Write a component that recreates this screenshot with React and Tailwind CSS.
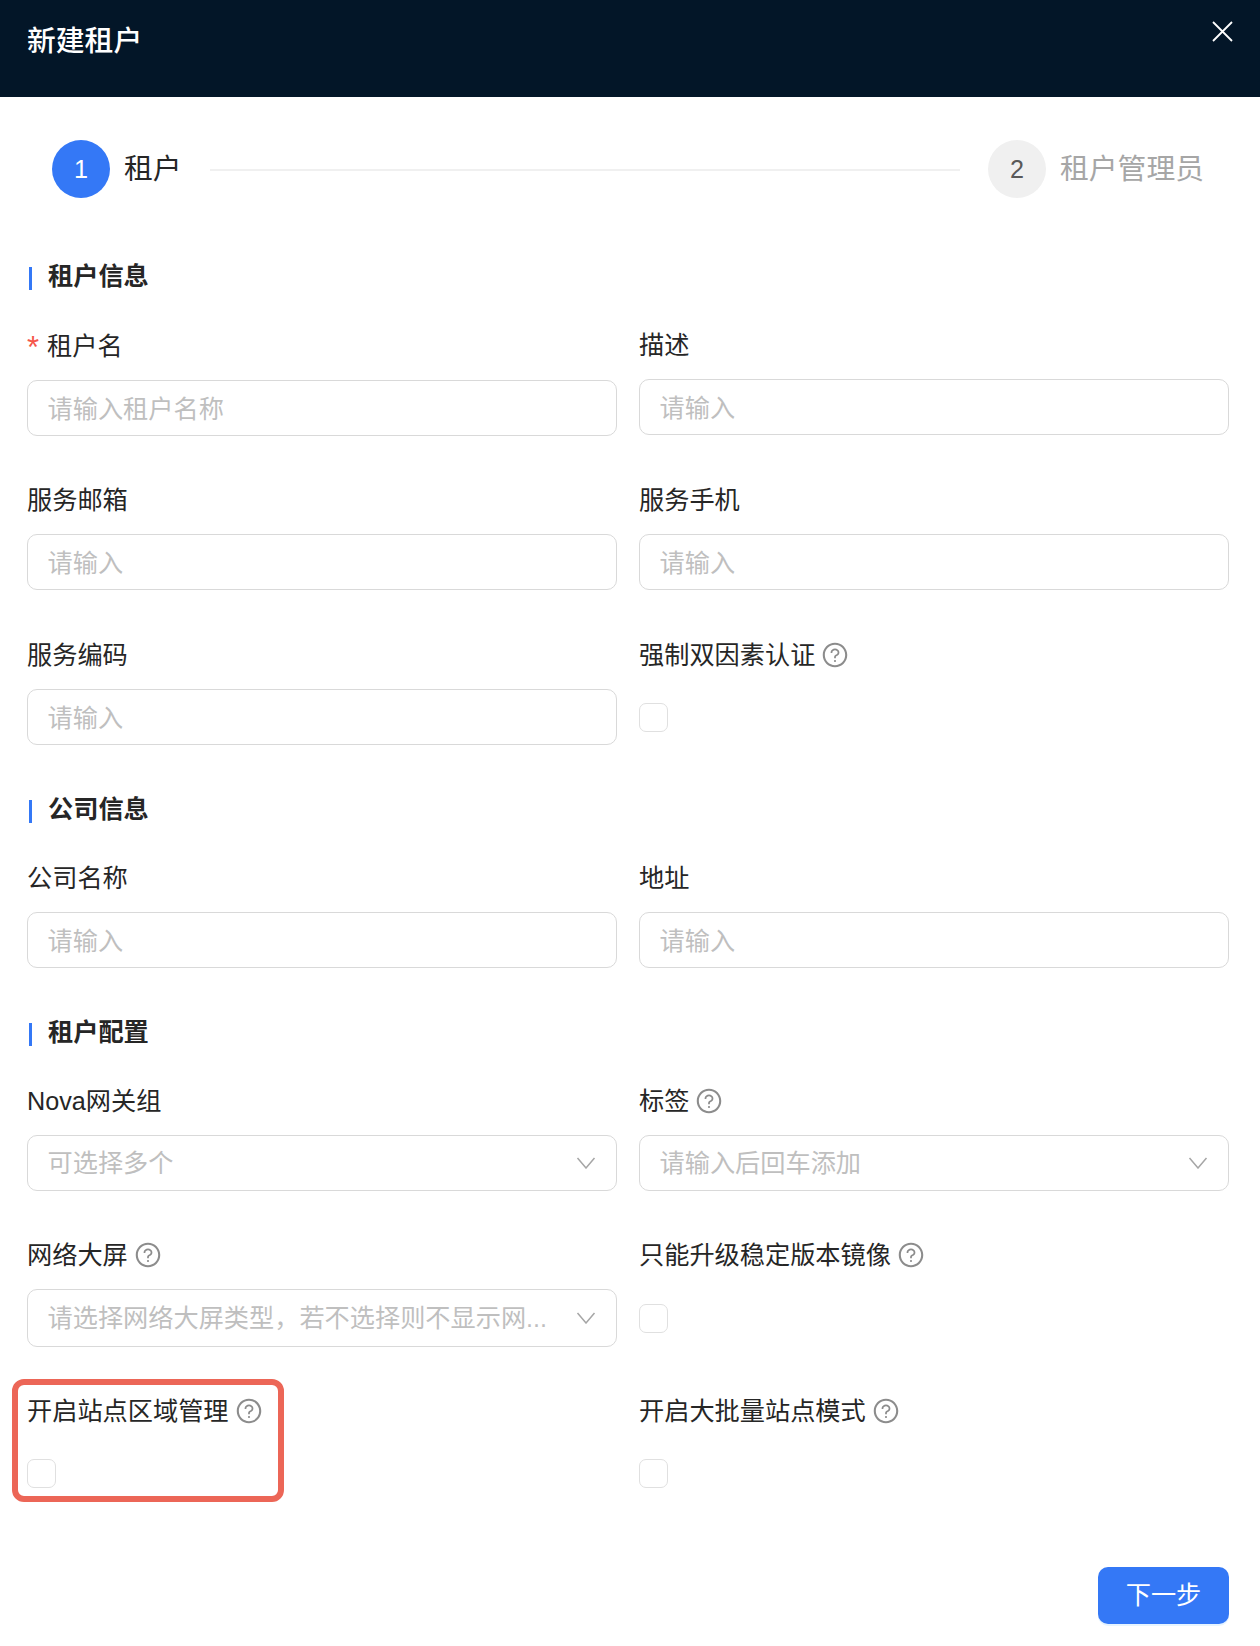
import React from 'react';
import { AiOutlineQuestionCircle } from 'react-icons/ai';

function Help() {
  return <AiOutlineQuestionCircle className="ml-[6px] text-[28px] text-[#8c8c8c] shrink-0" />;
}

function Label({ text, help, required }) {
  return (
    <div className="flex items-center h-[39px] mb-[15px] text-[25.2px] text-[#262626]">
      {required && <span className="w-[20px] mt-[4px] text-[31px] text-[#f5564a] font-['Liberation_Sans'] leading-none">*</span>}
      <span className="mt-[2px]">{text}</span>
      {help && <Help />}
    </div>
  );
}

function TextInput({ placeholder }) {
  return (
    <input
      readOnly
      placeholder={placeholder}
      className="block w-full h-[56px] pt-[2px] px-[19.5px] border border-[#d9d9d9] rounded-[10px] bg-white text-[25.2px] outline-none placeholder:text-[#bfbfbf]"
    />
  );
}

function Select({ placeholder, tall }) {
  return (
    <div className={`flex items-center justify-between ${tall ? 'h-[58px]' : 'h-[56px]'} pl-[19.5px] pr-[20px] border border-[#d9d9d9] rounded-[10px] text-[25.2px] text-[#bfbfbf]`}>
      <span className="mt-[2px] whitespace-nowrap">{placeholder}</span>
      <svg width="20" height="12" viewBox="0 0 20 12" fill="none" stroke="#a6a6a6" strokeWidth="1.5" className="shrink-0">
        <path d="M1.5 1 L10 11 L18.5 1" />
      </svg>
    </div>
  );
}

function Check({ tall }) {
  return (
    <div className={`flex items-center ${tall ? 'h-[58px]' : 'h-[56px]'}`}>
      <div className="w-[29px] h-[29px] border border-[#e0e0e0] rounded-[7px] bg-white" />
    </div>
  );
}

function Section({ title }) {
  return (
    <div className="flex items-center h-[39px] mb-[29px]">
      <div className="w-[3px] h-[23px] bg-[#3478f6] mt-[3px] mr-[16px] ml-[2px]" />
      <div className="mt-[1px] text-[25.2px] font-bold text-[#262626]">{title}</div>
    </div>
  );
}

function Item({ children, tight }) {
  return <div className={`relative ${tight ? 'mb-[44px]' : 'mb-[45px]'}`}>{children}</div>;
}

function Row({ children }) {
  return <div className="grid grid-cols-2 gap-x-[22px]">{children}</div>;
}

export default function App() {
  return (
    <div className="w-[1260px] h-[1646px] overflow-hidden bg-white font-['Liberation_Sans','Noto_Sans_CJK_SC',sans-serif]">
      <div className="flex items-start justify-between h-[97px] bg-[#031628] pl-[27px] pr-[27px]">
        <div className="mt-[21px] text-[28.8px] leading-[40px] font-medium text-white">新建租户</div>
        <svg width="21" height="21" viewBox="0 0 21 21" stroke="#fff" strokeWidth="1.8" className="mt-[21px]">
          <path d="M1 1 L20 20 M20 1 L1 20" />
        </svg>
      </div>

      <div className="flex items-center h-[58px] mt-[43px] pl-[52px] pr-[56px]">
        <div className="flex items-center justify-center w-[58px] h-[58px] pt-[2px] rounded-full bg-[#3478f6] text-[25.2px] text-white">1</div>
        <div className="ml-[14px] mt-[2px] text-[28.8px] text-[#262626]">租户</div>
        <div className="flex-1 h-[2px] mt-[2px] mx-[28px] bg-[#f0f0f0]" />
        <div className="flex items-center justify-center w-[58px] h-[58px] pt-[2px] rounded-full bg-[#f0f0f0] text-[25.2px] text-[#595959]">2</div>
        <div className="ml-[14px] mt-[2px] text-[28.8px] text-[#a6a6a6]">租户管理员</div>
      </div>

      <div className="mt-[59px] pl-[27px] pr-[31px]">
        <Section title="租户信息" />
        <Row>
          <Item>
            <div className="mt-[1px] -mb-[1px]">
              <Label text="租户名" required />
              <TextInput placeholder="请输入租户名称" />
            </div>
          </Item>
          <Item>
            <Label text="描述" />
            <TextInput placeholder="请输入" />
          </Item>
        </Row>
        <Row>
          <Item>
            <Label text="服务邮箱" />
            <TextInput placeholder="请输入" />
          </Item>
          <Item>
            <Label text="服务手机" />
            <TextInput placeholder="请输入" />
          </Item>
        </Row>
        <Row>
          <Item>
            <Label text="服务编码" />
            <TextInput placeholder="请输入" />
          </Item>
          <Item>
            <Label text="强制双因素认证" help />
            <Check />
          </Item>
        </Row>

        <Section title="公司信息" />
        <Row>
          <Item>
            <Label text="公司名称" />
            <TextInput placeholder="请输入" />
          </Item>
          <Item>
            <Label text="地址" />
            <TextInput placeholder="请输入" />
          </Item>
        </Row>

        <Section title="租户配置" />
        <Row>
          <Item tight>
            <Label text="Nova网关组" />
            <Select placeholder="可选择多个" />
          </Item>
          <Item tight>
            <Label text="标签" help />
            <Select placeholder="请输入后回车添加" />
          </Item>
        </Row>
        <Row>
          <Item tight>
            <Label text="网络大屏" help />
            <Select tall placeholder="请选择网络大屏类型，若不选择则不显示网..." />
          </Item>
          <Item tight>
            <Label text="只能升级稳定版本镜像" help />
            <Check tall />
          </Item>
        </Row>
        <Row>
          <Item>
            <Label text="开启站点区域管理" help />
            <Check />
            <div className="absolute left-[-15px] top-[-12px] w-[272px] h-[123px] border-[6px] border-[#ec6657] rounded-[12px]" />
          </Item>
          <Item>
            <Label text="开启大批量站点模式" help />
            <Check />
          </Item>
        </Row>

        <div className="flex justify-end mt-[21px]">
          <button className="w-[131px] h-[57px] rounded-[10px] bg-[#3478f6] text-[25.2px] text-white shadow-[0_2px_0_rgba(5,145,255,0.1)]">下一步</button>
        </div>
      </div>
    </div>
  );
}
